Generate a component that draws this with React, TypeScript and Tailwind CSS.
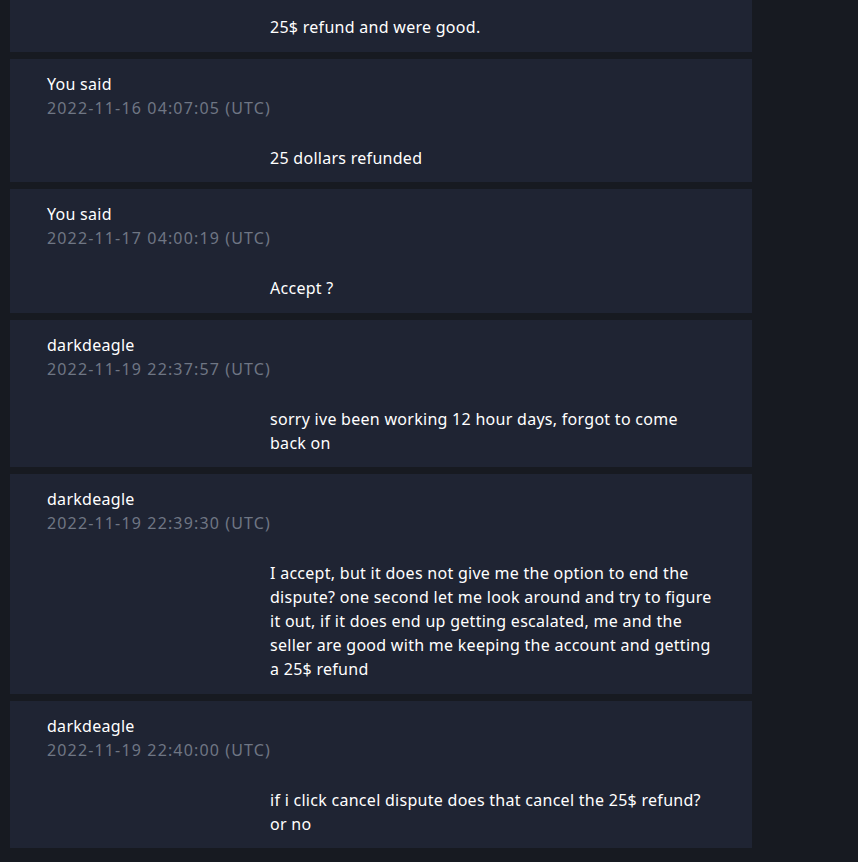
type Msg = { name: string; date: string; text: string };

const messages: Msg[] = [
  { name: 'You said', date: '2022-11-16 04:07:05 (UTC)', text: '25 dollars refunded' },
  { name: 'You said', date: '2022-11-17 04:00:19 (UTC)', text: 'Accept ?' },
  { name: 'darkdeagle', date: '2022-11-19 22:37:57 (UTC)', text: 'sorry ive been working 12 hour days, forgot to come back on' },
  {
    name: 'darkdeagle',
    date: '2022-11-19 22:39:30 (UTC)',
    text: 'I accept, but it does not give me the option to end the dispute? one second let me look around and try to figure it out, if it does end up getting escalated, me and the seller are good with me keeping the account and getting a 25$ refund',
  },
  { name: 'darkdeagle', date: '2022-11-19 22:40:00 (UTC)', text: 'if i click cancel dispute does that cancel the 25$ refund? or no' },
];

function Card({ m }: { m: Msg }) {
  return (
    <div className="bg-[#1f2433] pt-[13px] pb-[12.5px] pl-[37px]">
      <div className="text-white">{m.name}</div>
      <div className="text-[#6f7684] tracking-[1.15px]">{m.date}</div>
      <div className="mt-[26px] ml-[223px] w-[445px] text-white">{m.text}</div>
    </div>
  );
}

export default function App() {
  return (
    <div
      className="bg-[#171a21] h-[862px] overflow-hidden text-base leading-6 tracking-[0.28px]"
      style={{ fontFamily: '"Noto Sans", sans-serif' }}
    >
      <div className="w-[742px] ml-[10px] flex flex-col gap-[7px]">
        <div className="bg-[#1f2433] pt-[15px] pb-[12.5px] pl-[37px]">
          <div className="ml-[223px] w-[445px] text-white">25$ refund and were good.</div>
        </div>
        {messages.map((m, i) => (
          <Card key={i} m={m} />
        ))}
      </div>
    </div>
  );
}
